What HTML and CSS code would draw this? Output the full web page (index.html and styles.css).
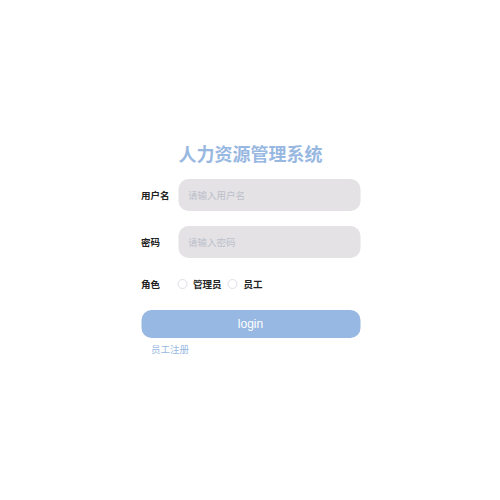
FILE: index.html
```
<!DOCTYPE html>
<html lang="zh">
<head>
<meta charset="utf-8">
<link rel="stylesheet" href="styles.css">
</head>
<body>
<div class="wrap">
  <h1 class="title">人力资源管理系统</h1>
  <form class="form">
    <div class="row">
      <label class="label">用户名</label>
      <input class="input" type="text" placeholder="请输入用户名">
    </div>
    <div class="row">
      <label class="label">密码</label>
      <input class="input" type="password" placeholder="请输入密码">
    </div>
    <div class="row role">
      <span class="label role-label">角色</span>
      <span class="radio"><span class="circle"></span>管理员</span>
      <span class="radio"><span class="circle"></span>员工</span>
    </div>
    <button class="btn" type="button">login</button>
    <a class="link">员工注册</a>
  </form>
</div>
</body>
</html>
```
FILE: styles.css
```
html, body { margin: 0; padding: 0; background: #fff; }
body { font-family: "Noto Sans CJK SC", "Liberation Sans", sans-serif; }
.wrap { width: 219px; margin: 0 auto; padding-top: 141px; transform: translateX(0.5px); }
.title {
  margin: 0; text-align: center; font-size: 18px; line-height: 24px;
  font-weight: 700; color: #98b8e2;
}
.form { display: flex; flex-direction: column; margin-top: 14px; }
.row { display: flex; align-items: center; height: 32px; margin-bottom: 15px; }
.label { width: 37px; flex: none; font-size: 9.5px; font-weight: 700; color: #222; }
.role-label { width: 36px; }
.input {
  flex: 1; height: 32px; box-sizing: border-box; border: none; outline: none;
  border-radius: 10px; background: #e4e2e4; padding: 0 10px;
  font-family: inherit; font-size: 9.5px; color: #333;
}
.input::placeholder { color: #bcc0cc; }
.role { height: 18px; margin-top: 2px; margin-bottom: 0; }
.radio { display: flex; align-items: center; font-size: 9.5px; font-weight: 700; color: #222; margin-right: 6px; }
.circle {
  width: 8px; height: 8px; border: 1px solid #dcdfe6; border-radius: 50%;
  margin-right: 6px; box-sizing: content-box;
}
.btn {
  margin-top: 17px; height: 28px; border: none; border-radius: 10px;
  background: #97b8e2; color: #fff; font-family: "Liberation Sans", sans-serif;
  font-size: 12px; padding: 0;
}
.link { margin-top: 5px; margin-left: 10px; font-size: 9.5px; color: #98b8e2; line-height: 12px; }
```
